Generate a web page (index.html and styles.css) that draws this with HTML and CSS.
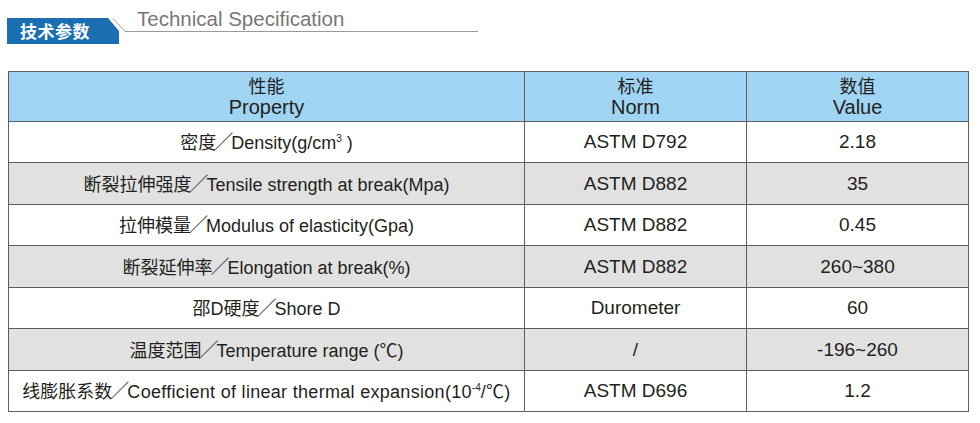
FILE: index.html
```html
<!DOCTYPE html>
<html lang="zh">
<head>
<meta charset="utf-8">
<title>技术参数 Technical Specification</title>
<link rel="stylesheet" href="styles.css">
</head>
<body>
<header class="sec-head">
  <div class="tab">技术参数</div>
  <svg class="diag" width="18" height="14" viewBox="0 0 18 14" aria-hidden="true"><line x1="6" y1="0.5" x2="18" y2="13.5" stroke="#9a9a9a" stroke-width="1"/></svg>
  <div class="title-box"><span class="title">Technical Specification</span></div>
</header>
<table class="spec">
  <colgroup><col class="c1"><col class="c2"><col class="c3"></colgroup>
  <thead>
    <tr><th><span class="zh">性能</span><br>Property</th><th><span class="zh">标准</span><br>Norm</th><th><span class="zh">数值</span><br>Value</th></tr>
  </thead>
  <tbody>
    <tr><td class="prop">密度<span class="sl">／</span>Density(g/cm<sup>3</sup> )</td><td>ASTM D792</td><td>2.18</td></tr>
    <tr class="alt"><td class="prop">断裂拉伸强度<span class="sl">／</span>Tensile strength at break(Mpa)</td><td>ASTM D882</td><td>35</td></tr>
    <tr><td class="prop">拉伸模量<span class="sl">／</span>Modulus of elasticity(Gpa)</td><td>ASTM D882</td><td>0.45</td></tr>
    <tr class="alt"><td class="prop">断裂延伸率<span class="sl">／</span>Elongation at break(%)</td><td>ASTM D882</td><td>260~380</td></tr>
    <tr><td class="prop">邵D硬度<span class="sl">／</span>Shore D</td><td>Durometer</td><td>60</td></tr>
    <tr class="alt"><td class="prop">温度范围<span class="sl">／</span>Temperature range (℃)</td><td>/</td><td>-196~260</td></tr>
    <tr><td class="prop">线膨胀系数<span class="sl">／</span><span class="wide">Coefficient of linear thermal expansion(10<sup>-4</sup>/℃)</span></td><td>ASTM D696</td><td>1.2</td></tr>
  </tbody>
</table>
</body>
</html>
```
FILE: styles.css
```css
html, body {
  margin: 0;
  padding: 0;
  background: #ffffff;
}
body {
  font-family: "Liberation Sans", "Noto Sans CJK SC", sans-serif;
  color: #231f20;
}
.sec-head {
  display: flex;
  align-items: flex-start;
  margin-left: 7px;
  height: 45px;
}
.tab {
  margin-top: 18px;
  width: 112px;
  height: 26px;
  box-sizing: border-box;
  padding-left: 13px;
  background: #1a6fb2;
  color: #ffffff;
  font-family: "Noto Sans CJK SC", sans-serif;
  font-weight: 700;
  font-size: 17px;
  line-height: 26px;
  letter-spacing: 0.5px;
  clip-path: polygon(0 0, 101px 0, 112px 13px, 112px 100%, 0 100%);
}
.diag {
  display: block;
  margin-top: 18px;
  margin-left: -12px;
  flex: none;
}
.title-box {
  width: 353px;
  height: 32px;
  box-sizing: border-box;
  border-bottom: 1px solid #9a9a9a;
  padding-left: 12px;
  display: flex;
  align-items: flex-end;
}
.title {
  font-size: 20.5px;
  line-height: 24px;
  color: #777777;
}
.spec {
  margin: 26px 0 0 8px;
  border-collapse: collapse;
  width: 960px;
  table-layout: fixed;
  font-size: 19px;
}
.c1 { width: 516px; }
.c2 { width: 222px; }
.c3 { width: 222px; }
.spec th, .spec td {
  border: 1px solid #5e5e5e;
  text-align: center;
  padding: 0;
  white-space: nowrap;
}
.spec th {
  background: #a0d4f3;
  font-weight: 400;
  font-size: 20px;
  line-height: 20px;
  height: 49px;
}
.spec th .zh {
  font-size: 18px;
}
.spec td {
  height: 40px;
  line-height: 22px;
}
.spec td.prop {
  font-size: 18px;
}
.spec tr.alt td {
  background: #e1e1e1;
  height: 41px;
}
.sl {
  font-family: "Noto Sans CJK SC", sans-serif;
  font-size: 19px;
  color: #444444;
  letter-spacing: -2px;
  margin-left: -2px;
}
.wide {
  letter-spacing: 0.3px;
}
.spec sup {
  font-size: 10px;
  line-height: 0;
  vertical-align: 7px;
  letter-spacing: 0;
}
```
